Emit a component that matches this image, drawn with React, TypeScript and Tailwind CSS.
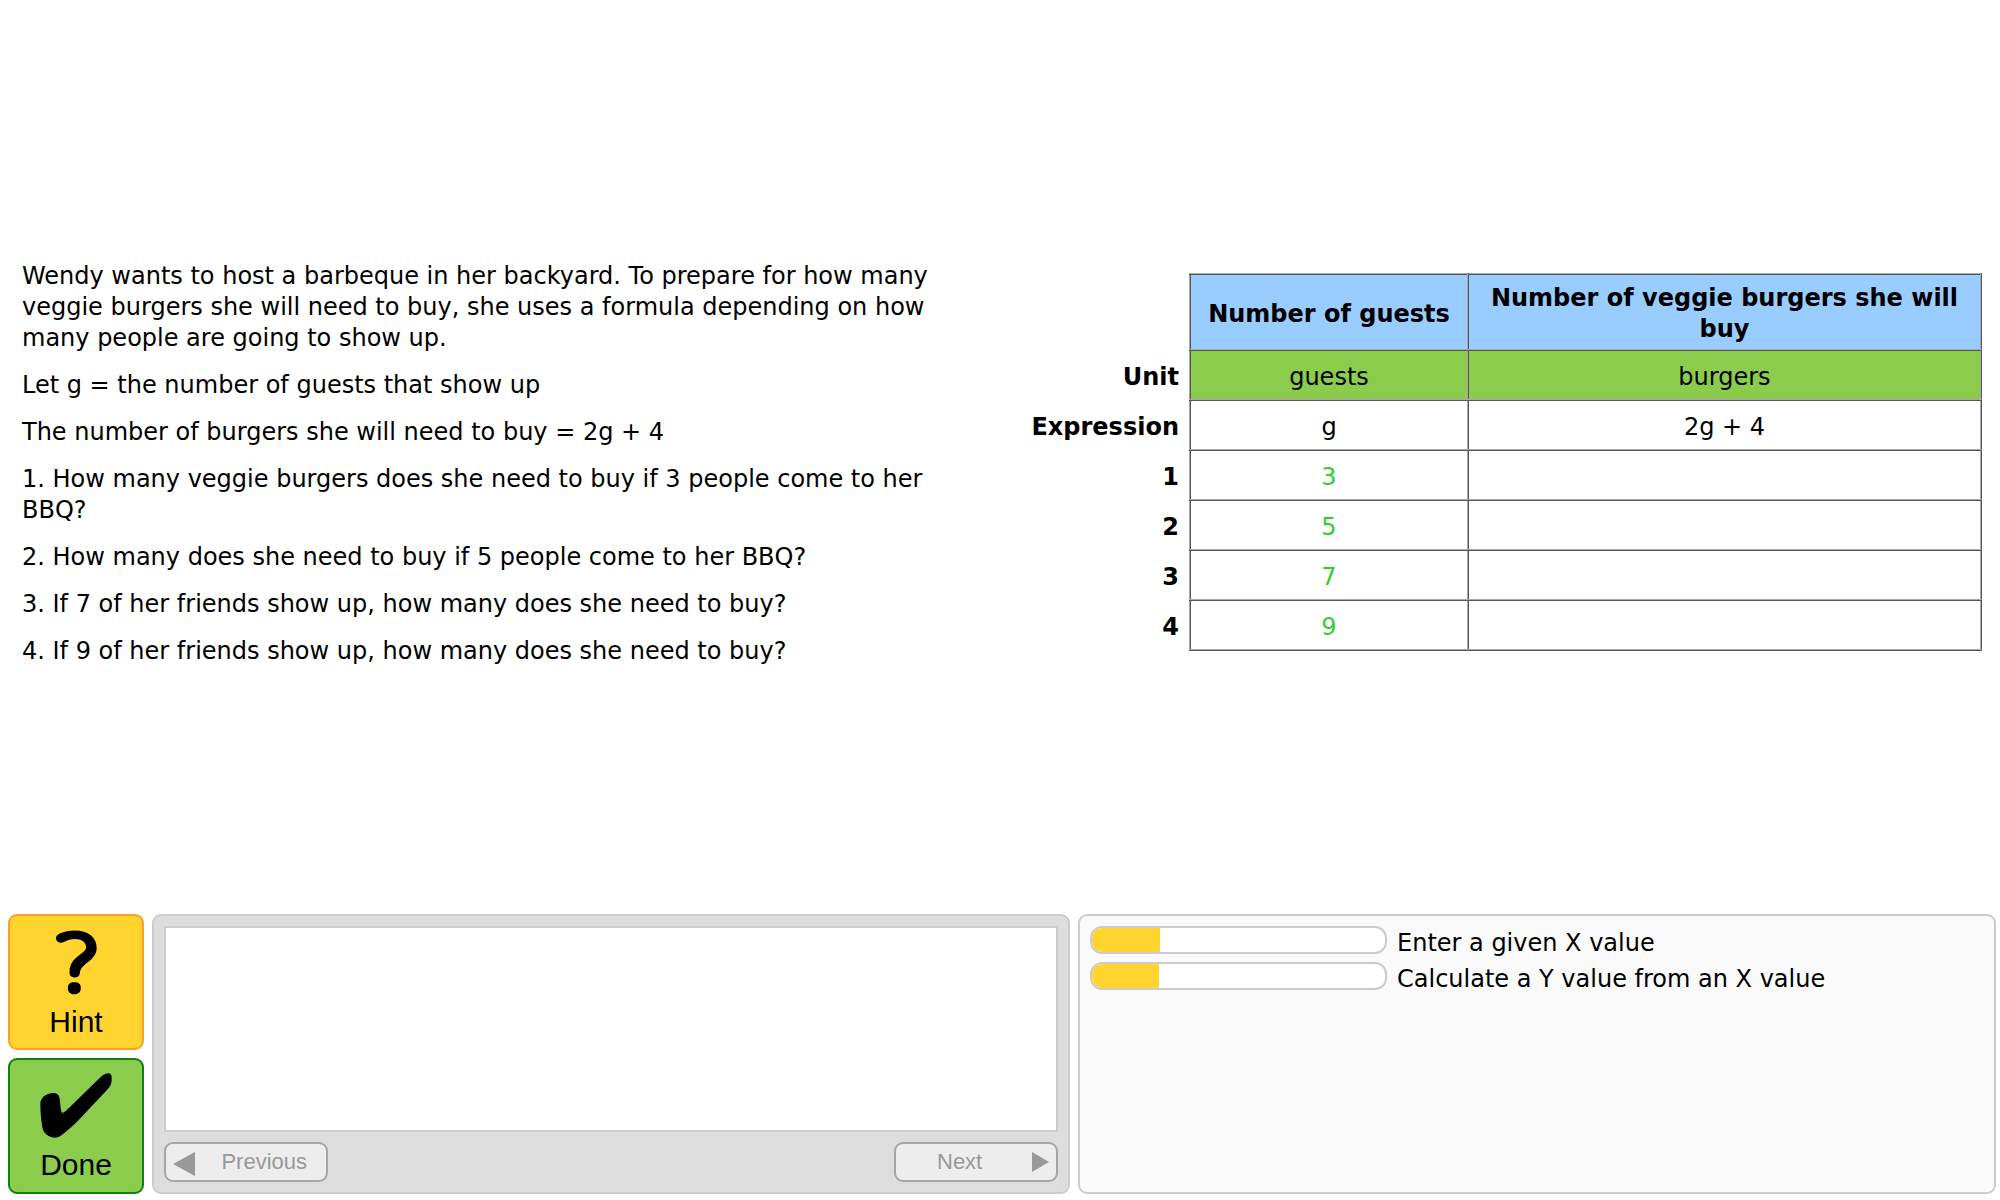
const problem = [
  'Wendy wants to host a barbeque in her backyard. To prepare for how many veggie burgers she will need to buy, she uses a formula depending on how many people are going to show up.',
  'Let g = the number of guests that show up',
  'The number of burgers she will need to buy = 2g + 4',
  '1. How many veggie burgers does she need to buy if 3 people come to her BBQ?',
  '2. How many does she need to buy if 5 people come to her BBQ?',
  '3. If 7 of her friends show up, how many does she need to buy?',
  '4. If 9 of her friends show up, how many does she need to buy?',
];

const rows = ['3', '5', '7', '9'];

const skills = [
  { id: 'enter-x', label: 'Enter a given X value', percent: 23.3 },
  { id: 'calc-y', label: 'Calculate a Y value from an X value', percent: 23 },
];

const cell = 'h-[50px] border-2 border-[#a9a9a9] [border-style:ridge] pt-1 text-center';
const rowHead = 'h-[50px] pt-1 pr-2.5 text-right font-bold';
const field = 'block h-[42px] w-full bg-transparent text-center outline-none';

function QuestionIcon() {
  return (
    <svg viewBox="165 95 124 194" className="h-[65px] w-[41px]" aria-hidden="true">
      <path d="M182 132C171 133 165 127 165 118C165 111 171 107 180 103C193 97 207 95 222 95C263 95 288 115 288 148C288 166 277 179 261 191C247 202 237 212 237 225C236 233 230 237 221 237C211 237 205 231 206 220C206 198 217 184 234 171C247 161 256 155 256 147C256 130 243 121 222 121C201 121 194 130 182 132Z" />
      <path d="M220 252C234 252 240 258 240 269C240 280 234 288 220 288C207 288 201 281 201 269C201 258 207 252 220 252Z" />
    </svg>
  );
}

function CheckIcon() {
  return (
    <svg viewBox="120 520 216 195" className="h-[65px] w-[72px]" aria-hidden="true">
      <path d="M121 613C121 595 137 580 160 580C172 580 177 586 179 598C182 622 182 636 187 640C192 640 203 628 213 619L299 535C309 525 318 521 326 521C334 522 336 530 335 541C335 552 331 560 323 569L236 661C221 677 207 688 193 700C184 708 176 714 166 714C148 714 129 702 127 682C123 659 121 636 121 613Z" />
    </svg>
  );
}

export default function App() {
  return (
    <div className="flex min-h-screen flex-col bg-white font-['DejaVu_Sans',Verdana,sans-serif] text-[24px] leading-[31px] text-black">
      <main className="grid flex-1 grid-cols-2 items-center gap-x-11 pt-3 pr-[18px] pl-[22px]">
        <section className="flex flex-col gap-4 pt-0.5">
          {problem.map((p) => (
            <p key={p}>{p}</p>
          ))}
        </section>
        <table className="mb-0.5 w-full table-fixed border-collapse">
          <colgroup>
            <col className="w-[166px]" />
            <col className="w-[278px]" />
            <col />
          </colgroup>
          <thead>
            <tr className="h-[76px]">
              <td />
              <th scope="col" className={`${cell} bg-[#99ccff]`}>Number of guests</th>
              <th scope="col" className={`${cell} bg-[#99ccff] px-4`}>Number of veggie burgers she will buy</th>
            </tr>
          </thead>
          <tbody>
            <tr>
              <th scope="row" className={rowHead}>Unit</th>
              <td className={`${cell} bg-[#8bcc4d]`}>guests</td>
              <td className={`${cell} bg-[#8bcc4d]`}>burgers</td>
            </tr>
            <tr>
              <th scope="row" className={rowHead}>Expression</th>
              <td className={cell}>g</td>
              <td className={cell}>2g + 4</td>
            </tr>
            {rows.map((v, i) => (
              <tr key={v}>
                <th scope="row" className={rowHead}>{i + 1}</th>
                <td className={cell}>
                  <input className={`${field} text-[#32cd32]`} defaultValue={v} readOnly aria-label={`Number of guests, row ${i + 1}`} />
                </td>
                <td className={cell}>
                  <input className={field} aria-label={`Number of veggie burgers, row ${i + 1}`} />
                </td>
              </tr>
            ))}
          </tbody>
        </table>
      </main>

      <footer className="flex items-stretch gap-2 pr-1 pb-1.5 pl-2">
        <div className="flex flex-col gap-2 font-['Liberation_Sans',Arial,sans-serif] text-[30px] leading-[34px]">
          <button type="button" className="flex size-[136px] flex-col items-center justify-center gap-2.5 rounded-[9px] border-2 border-[#ffa023] bg-[#ffd42f] pt-1">
            <QuestionIcon />
            Hint
          </button>
          <button type="button" className="flex size-[136px] flex-col items-center justify-center gap-2.5 rounded-[9px] border-2 border-[#108010] bg-[#8bcc4d] pt-0.5">
            <CheckIcon />
            Done
          </button>
        </div>

        <section aria-label="Hints" className="flex flex-1 flex-col gap-2.5 rounded-[9px] border-2 border-[#ccc] bg-[#ddd] p-2.5">
          <div className="flex-1 border-2 border-[#ccc] bg-white" />
          <div className="flex justify-between font-['Liberation_Sans',Arial,sans-serif] text-[22px] leading-6 text-[#999]">
            <button type="button" disabled className="flex h-10 w-[164px] items-center justify-between rounded-[9px] border-2 border-[#a6a6a6] bg-[#ededed] pr-[19px] pl-[7px]">
              <svg viewBox="0 0 22 24" className="mt-1 h-6 w-[22px] fill-current" aria-hidden="true">
                <path d="M22 0V24L0 12Z" />
              </svg>
              Previous
            </button>
            <button type="button" disabled className="flex h-10 w-[164px] items-center justify-between rounded-[9px] border-2 border-[#a6a6a6] bg-[#ededed] pr-[7px] pl-[41px]">
              Next
              <svg viewBox="0 0 17 20" className="h-5 w-[17px] fill-current" aria-hidden="true">
                <path d="M0 0V20L17 10Z" />
              </svg>
            </button>
          </div>
        </section>

        <section aria-label="Skills" className="flex flex-1 flex-col gap-2 rounded-[9px] border-2 border-[#ccc] bg-[#fafafa] p-2.5">
          {skills.map((s) => (
            <div key={s.id} className="flex h-7 items-center gap-2.5">
              <div role="progressbar" aria-labelledby={s.id} aria-valuenow={s.percent} className="h-7 w-[297px] overflow-hidden rounded-[12px] border-2 border-[#ccc] bg-white">
                <div className="h-full bg-[#ffd42f]" style={{ width: `${s.percent}%` }} />
              </div>
              <span id={s.id} className="pt-1.5">{s.label}</span>
            </div>
          ))}
        </section>
      </footer>
    </div>
  );
}
